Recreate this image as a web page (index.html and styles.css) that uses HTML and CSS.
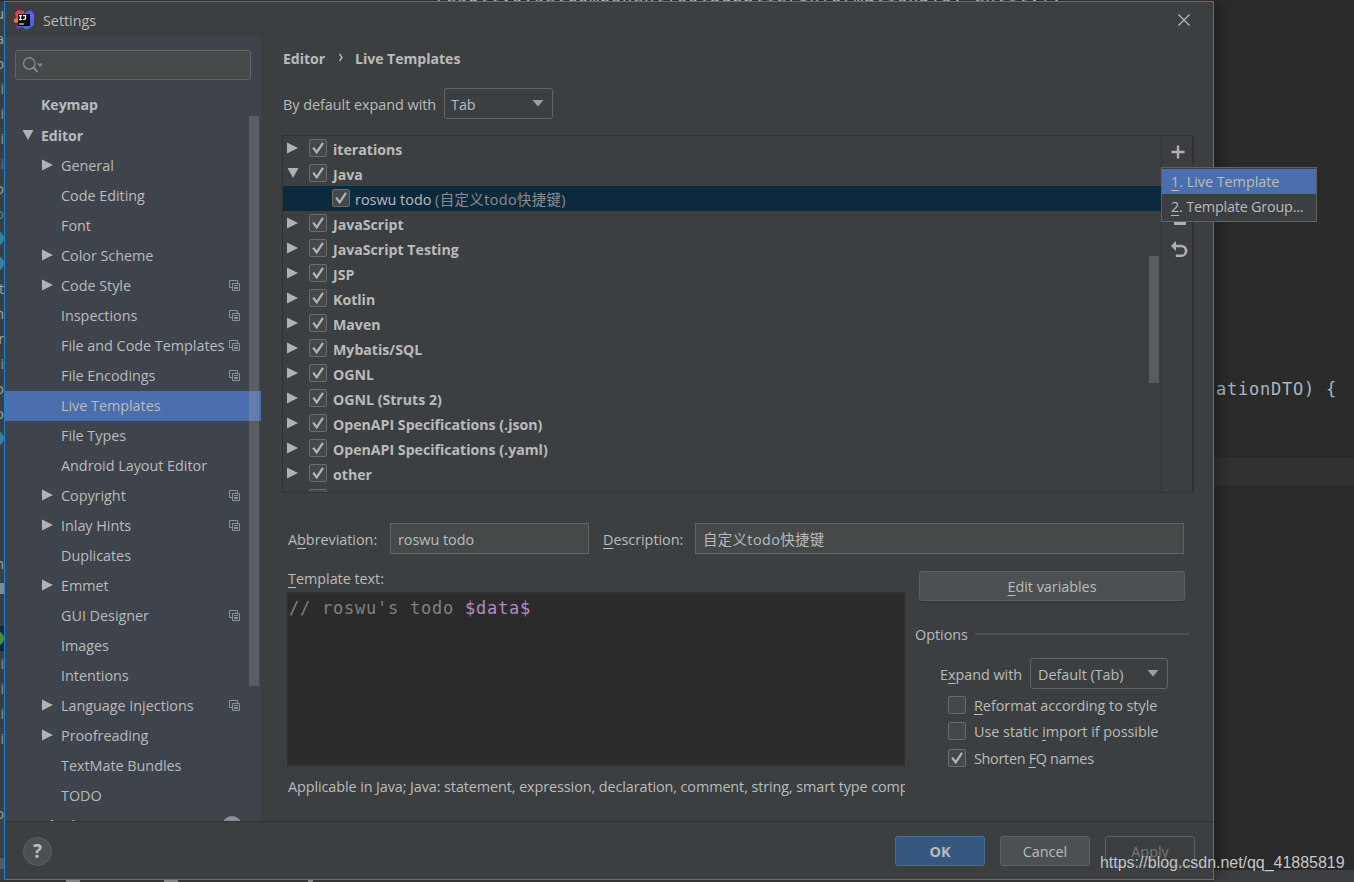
FILE: index.html
```html
<!DOCTYPE html>
<html lang="en">

<head>
  <meta charset="utf-8">
  <title>Settings</title>
  <link rel="stylesheet" href="styles.css">
</head>

<body>
  <!-- shared icons -->
  <svg class="defs" width="0" height="0">
    <symbol id="right" viewBox="0 0 12 12"><path d="M0 0.5L11 6L0 11.5Z" fill="#afb1b3" /></symbol>
    <symbol id="down" viewBox="0 0 12 12"><path d="M0.5 1H11.5L6 11Z" fill="#afb1b3" /></symbol>
    <symbol id="copy" viewBox="0 0 11 11">
      <path d="M3 7.5H0.5V0.5H8.5V3" fill="none" stroke="#87939a" />
      <path d="M3.5 3.5H10.5V10.5H3.5Z" fill="none" stroke="#87939a" />
      <path d="M5 5.5H9M5 7.5H9M5 8.5H9" stroke="#87939a" />
    </symbol>
    <symbol id="check" viewBox="1 1 16 16"><path d="M4.2 8.6L7.7 13.4L14 3.8" fill="none" stroke="#b4b6b7" stroke-width="2.2" /></symbol>
  </svg>

  <!-- editor behind the dialog -->
  <div class="gutter">
    <span>u</span><span>a</span><span class="tan">p</span><span class="pale">i</span><span class="pale">i</span>
    <span class="pale">i</span><span class="blue">i</span><span class="tan">o</span><span class="teal">o</span>
    <span><i class="dot"></i></span><span><i class="dot"></i></span><span>t</span><span>h</span><span>r</span>
    <span class="pale">i</span><span class="tan">o</span><span>o</span><span><i class="dot"></i></span>
    <span></span><span></span><span></span><span></span><span>n</span><span><i class="block"></i></span><span></span>
    <span class="current"><i class="dot green"></i></span><span class="pale">i</span><span class="pale">i</span>
    <span class="pale">i</span><span class="pale">i</span><span></span><span></span><span class="tan">p</span>
    <span></span><span><i class="block dim"></i></span>
  </div>
  <div class="code-top">resultVo.setComponentToolSupplierInformationDTO, entity);</div>
  <div class="code-right">nationDTO) {</div>
  <div class="caret-row"></div>
  <div class="status"></div>
  <div class="taskbar"><i></i><i></i><b></b></div>

  <div class="dialog">
    <div class="titlebar">
      <svg class="logo" width="20" height="20" viewBox="0 0 20 20">
        <path d="M1 3L4 0L10 1L11 5L4 12L0 10L2 8Z" fill="#fe315d" />
        <path d="M0 9L3 8L4 12L2 13L0 12Z" fill="#f97a12" />
        <path d="M12 2L16 0L20 4V15L13 20L8 17Z" fill="#3e67e0" />
        <path d="M16 0L20 4V9L16 12Z" fill="#6b57ff" />
        <path d="M3 15L9 16L6 18L2 19Z" fill="#8a3ab5" />
        <path d="M4 4H16V16H4Z" fill="#050505" />
        <path d="M5 5.6H8M6.5 5.6V9.6M5 9.6H8M9 5.6H11.5V8.3Q11.5 9.6 9 9.6" fill="none" stroke="#fff" stroke-width="1.3" />
        <path d="M5 14H10" stroke="#ddd" stroke-width="1.2" />
      </svg>
      <span>Settings</span>
      <svg class="close" width="12" height="12" viewBox="0 0 12 12"><path d="M0.5 0.5L11.5 11.5M11.5 0.5L0.5 11.5" stroke="#bbb" stroke-width="1.2" /></svg>
    </div>

    <div class="body">
      <div class="sidebar">
        <div class="search">
          <svg width="22" height="18" viewBox="0 0 22 18" fill="none" stroke="#7d8d94" stroke-width="1.4">
            <circle cx="6.3" cy="6.5" r="5.7" /><path d="M10.4 10.5L14.5 14.8" stroke-width="2" /><path d="M14 6.5H20L17 10Z" fill="#7d8d94" stroke="none" />
          </svg>
        </div>
        <div class="tree">
          <div class="item top keymap"><span>Keymap</span></div>
          <div class="item top"><svg class="arrow"><use href="#down" /></svg><span>Editor</span></div>
          <div class="item"><svg class="arrow"><use href="#right" /></svg><span>General</span></div>
          <div class="item"><span>Code Editing</span></div>
          <div class="item"><span>Font</span></div>
          <div class="item"><svg class="arrow"><use href="#right" /></svg><span>Color Scheme</span></div>
          <div class="item"><svg class="arrow"><use href="#right" /></svg><span>Code Style</span><svg class="copy"><use href="#copy" /></svg></div>
          <div class="item"><span>Inspections</span><svg class="copy"><use href="#copy" /></svg></div>
          <div class="item"><span>File and Code Templates</span><svg class="copy"><use href="#copy" /></svg></div>
          <div class="item"><span>File Encodings</span><svg class="copy"><use href="#copy" /></svg></div>
          <div class="item selected"><span>Live Templates</span></div>
          <div class="item"><span>File Types</span></div>
          <div class="item"><span>Android Layout Editor</span></div>
          <div class="item"><svg class="arrow"><use href="#right" /></svg><span>Copyright</span><svg class="copy"><use href="#copy" /></svg></div>
          <div class="item"><svg class="arrow"><use href="#right" /></svg><span>Inlay Hints</span><svg class="copy"><use href="#copy" /></svg></div>
          <div class="item"><span>Duplicates</span></div>
          <div class="item"><svg class="arrow"><use href="#right" /></svg><span>Emmet</span></div>
          <div class="item"><span>GUI Designer</span><svg class="copy"><use href="#copy" /></svg></div>
          <div class="item"><span>Images</span></div>
          <div class="item"><span>Intentions</span></div>
          <div class="item"><svg class="arrow"><use href="#right" /></svg><span>Language Injections</span><svg class="copy"><use href="#copy" /></svg></div>
          <div class="item"><svg class="arrow"><use href="#right" /></svg><span>Proofreading</span></div>
          <div class="item"><span>TextMate Bundles</span></div>
          <div class="item"><span>TODO</span></div>
          <div class="item top plugins"><span>Plugins</span><b class="badge">2</b></div>
          <div class="tree-scroll"></div>
        </div>
      </div>

      <div class="main">
        <div class="crumbs"><span class="crumb-root">Editor</span><svg width="6" height="10" viewBox="0 0 6 10"><path d="M2.5 1L5 4.5L2.5 8" fill="none" stroke="#bbb" stroke-width="1.3" /></svg><span class="crumb-page">Live Templates</span></div>
        <div class="expand">
          <span class="expand-label">By default expand with</span>
          <div class="combo combo-tab"><span>Tab</span><svg width="12" height="7" viewBox="0 0 12 7"><path d="M0.5 0H11.5L6 6.5Z" fill="#9da0a2" /></svg></div>
        </div>

        <div class="templates">
          <div class="list">
            <div class="row"><svg class="arrow"><use href="#right" /></svg><svg class="box"><use href="#check" /></svg><b>iterations</b></div>
            <div class="row"><svg class="arrow"><use href="#down" /></svg><svg class="box"><use href="#check" /></svg><b>Java</b></div>
            <div class="row child"><svg class="box"><use href="#check" /></svg><span>roswu todo <em>(自定义todo快捷键)</em></span></div>
            <div class="row"><svg class="arrow"><use href="#right" /></svg><svg class="box"><use href="#check" /></svg><b>JavaScript</b></div>
            <div class="row"><svg class="arrow"><use href="#right" /></svg><svg class="box"><use href="#check" /></svg><b>JavaScript Testing</b></div>
            <div class="row"><svg class="arrow"><use href="#right" /></svg><svg class="box"><use href="#check" /></svg><b>JSP</b></div>
            <div class="row"><svg class="arrow"><use href="#right" /></svg><svg class="box"><use href="#check" /></svg><b>Kotlin</b></div>
            <div class="row"><svg class="arrow"><use href="#right" /></svg><svg class="box"><use href="#check" /></svg><b>Maven</b></div>
            <div class="row"><svg class="arrow"><use href="#right" /></svg><svg class="box"><use href="#check" /></svg><b>Mybatis/SQL</b></div>
            <div class="row"><svg class="arrow"><use href="#right" /></svg><svg class="box"><use href="#check" /></svg><b>OGNL</b></div>
            <div class="row"><svg class="arrow"><use href="#right" /></svg><svg class="box"><use href="#check" /></svg><b>OGNL (Struts 2)</b></div>
            <div class="row"><svg class="arrow"><use href="#right" /></svg><svg class="box"><use href="#check" /></svg><b>OpenAPI Specifications (.json)</b></div>
            <div class="row"><svg class="arrow"><use href="#right" /></svg><svg class="box"><use href="#check" /></svg><b>OpenAPI Specifications (.yaml)</b></div>
            <div class="row"><svg class="arrow"><use href="#right" /></svg><svg class="box"><use href="#check" /></svg><b>other</b></div>
            <div class="row last"><svg class="box"></svg></div>
            <div class="list-scroll"></div>
          </div>
          <div class="tools">
            <svg width="14" height="14" viewBox="0 0 14 14"><path d="M7 0.5V13.5M0.5 7H13.5" stroke="#afb1b3" stroke-width="2.4" /></svg>
            <svg class="minus" width="14" height="3" viewBox="0 0 14 3"><path d="M1 1.5H13" stroke="#afb1b3" stroke-width="3" /></svg>
            <svg class="undo" width="18" height="17" viewBox="0 0 18 17"><path d="M4 5H10.2A4.9 4.9 0 0 1 10.2 14.8H4.8" fill="none" stroke="#afb1b3" stroke-width="2.6" /><path d="M0 5L5 0V10Z" fill="#afb1b3" /></svg>
          </div>
        </div>

        <div class="fields">
          <span class="abbr">A<u>b</u>breviation:</span>
          <div class="input input-abbr">roswu todo</div>
          <span class="desc"><u>D</u>escription:</span>
          <div class="input input-desc">自定义todo快捷键</div>
        </div>

        <div class="lower">
          <div class="text">
            <div class="text-label"><u>T</u>emplate text:</div>
            <div class="editor">// roswu's todo <span>$data$</span></div>
            <div class="applicable">Applicable in Java; Java: statement, expression, declaration, comment, string, smart type completion</div>
          </div>
          <div class="options">
            <div class="btn variables"><span><u>E</u>dit variables</span></div>
            <div class="legend"><span>Options</span><hr></div>
            <div class="expand-with">
              <span>E<u>x</u>pand with</span>
              <div class="combo combo-default"><span>Default (Tab)</span><svg width="12" height="7" viewBox="0 0 12 7"><path d="M0.5 0H11.5L6 6.5Z" fill="#9da0a2" /></svg></div>
            </div>
            <div class="option"><svg class="box"></svg><span><u>R</u>eformat according to style</span></div>
            <div class="option"><svg class="box"></svg><span>Use static <u>i</u>mport if possible</span></div>
            <div class="option"><svg class="box"><use href="#check" /></svg><span class="shorten">Shorten <u>F</u>Q names</span></div>
          </div>
        </div>
      </div>
    </div>

    <div class="footer">
      <div class="help">?</div>
      <div class="btn ok">OK</div>
      <div class="btn">Cancel</div>
      <div class="btn disabled">Apply</div>
    </div>
  </div>

  <div class="popup">
    <div class="popup-item active"><u>1</u>. Live Template</div>
    <div class="popup-item group"><u>2</u>. Template Group...</div>
  </div>

  <div class="watermark">https://blog.csdn.net/qq_41885819</div>
</body>

</html>
```
FILE: styles.css
```css
* {
  box-sizing: border-box;
}

body {
  margin: 0;
  width: 1354px;
  height: 882px;
  position: relative;
  overflow: hidden;
  background-color: #2b2b2b;
  color: #bbbbbb;
  font-family: "Open Sans", "Noto Sans CJK SC", sans-serif;
  font-size: 14.4px;
  letter-spacing: -0.03px;
  white-space: nowrap;
}

svg {
  display: block;
  flex-shrink: 0;
}

u {
  text-decoration-thickness: 1px;
  text-underline-offset: 3px;
  text-decoration-skip-ink: none;
}

.defs {
  position: absolute;
}

/* editor window behind */
.gutter {
  position: absolute;
  left: 0;
  top: 1px;
  width: 4px;
  height: 881px;
  overflow: hidden;
  background-color: #3c3f41;
  display: flex;
  flex-direction: column;
}

.gutter span {
  flex: 0 0 25px;
  display: flex;
  align-items: center;
  justify-content: flex-end;
  color: #a0a3a5;
}

.gutter .tan { color: #a8a283; }
.gutter .pale { color: #8297a3; }
.gutter .blue { color: #4c78b0; }
.gutter .teal { color: #4a8296; }
.gutter .current { background-color: #0d293e; }

.dot {
  flex: none;
  width: 15px;
  height: 15px;
  border-radius: 50%;
  background-color: #3b8296;
}

.green {
  background-color: #4b8f3c;
}

.block {
  width: 4px;
  height: 11px;
  background-color: #7f8b91;
}

.dim {
  background-color: #56595b;
}

.code-top,
.code-right,
.editor {
  font-family: "DejaVu Sans Mono", monospace;
  font-size: 17px;
  letter-spacing: 0.77px;
}

.code-top {
  position: absolute;
  left: 435px;
  top: -12px;
  height: 14px;
  line-height: 16px;
  overflow: hidden;
  color: #a9b7c6;
}

.code-right {
  position: absolute;
  left: 1205px;
  top: 378px;
  line-height: 22px;
  color: #a9b7c6;
}

.caret-row {
  position: absolute;
  left: 1214px;
  top: 458px;
  width: 140px;
  height: 27px;
  background-color: #323232;
}

.status {
  position: absolute;
  left: 1214px;
  top: 870px;
  width: 140px;
  height: 12px;
  background-color: #3c3f41;
}

.taskbar {
  position: absolute;
  left: 0;
  top: 880px;
  width: 1214px;
  height: 2px;
  padding-left: 66px;
  background-color: #323437;
  display: flex;
  gap: 84px;
}

.taskbar i,
.taskbar b {
  width: 14px;
  background-color: #85878a;
}

.taskbar b {
  width: 5px;
  margin-left: 46px;
}

/* dialog */
.dialog {
  position: absolute;
  left: 4px;
  top: 1px;
  width: 1210px;
  height: 879px;
  border: 1px solid #1883d7;
  background-color: #3c3f41;
  box-shadow: 4px 0 18px rgba(0, 0, 0, 0.35);
  clip-path: inset(0 -30px 0 0);
  display: flex;
  flex-direction: column;
}

.titlebar {
  height: 35px;
  padding: 0 23px 0 9px;
  display: flex;
  align-items: center;
}

.titlebar span {
  margin: 2px auto 0 9px;
}

.body {
  height: 784px;
  display: flex;
}

.sidebar {
  width: 256px;
  padding-top: 13px;
  background-color: #3e434c;
}

.search {
  width: 236px;
  height: 30px;
  margin-left: 10px;
  padding: 6px 7px;
  border: 1px solid #646464;
  border-radius: 3px;
  background-color: #45494a;
}

.tree {
  position: relative;
  margin-top: 11px;
  height: 730px;
  overflow: hidden;
}

.item {
  height: 30px;
  padding: 0 21px 2px 56px;
  display: flex;
  align-items: center;
}

.item .arrow {
  margin-left: -19px;
  margin-right: 7px;
}

.top {
  padding-left: 36px;
  font-weight: bold;
  font-size: 14.1px;
}

.keymap {
  padding-bottom: 3px;
}

.plugins {
  padding-bottom: 1px;
}

.arrow {
  width: 12px;
  height: 12px;
}

.copy {
  width: 11px;
  height: 11px;
  margin-left: auto;
  margin-top: 1px;
}

.badge {
  width: 20px;
  height: 20px;
  margin-left: auto;
  margin-right: -2px;
  margin-top: 1px;
  border-radius: 50%;
  background-color: #87939a;
  color: #3e434c;
  text-align: center;
}

.selected {
  background-color: #4b6eaf;
}

.tree-scroll {
  position: absolute;
  right: 2px;
  top: 25px;
  width: 10px;
  height: 570px;
  background-color: rgba(166, 166, 166, 0.28);
}

/* right side */
.main {
  padding: 6px 0 0 21px;
  width: 952px;
}

.crumbs {
  height: 30px;
  display: flex;
  align-items: center;
  font-weight: bold;
  font-size: 14.1px;
}

.crumb-root {
  width: 55px;
  padding-left: 1px;
}

.crumb-page {
  margin-left: 12px;
}

.expand {
  height: 31px;
  margin-top: 15px;
  padding-left: 1px;
  display: flex;
  align-items: center;
}

.expand-label {
  width: 161px;
  padding-top: 2px;
}

.combo {
  height: 31px;
  padding: 0 8px 0 6px;
  border: 1px solid #646464;
  border-radius: 3px;
  display: flex;
  align-items: center;
  justify-content: space-between;
}

.combo span {
  padding-top: 2px;
}

.combo-tab {
  width: 109px;
}

.combo-default {
  width: 138px;
  padding-left: 7px;
}

.templates {
  width: 912px;
  height: 358px;
  margin-top: 16px;
  border: 1px solid #323232;
  border-right-width: 2px;
  display: flex;
}

.list {
  position: relative;
  width: 878px;
  overflow: hidden;
}

.row {
  height: 25px;
  padding-left: 4px;
  display: flex;
  align-items: center;
  font-size: 14.15px;
}

.row .arrow {
  margin-right: 10px;
  margin-bottom: 1px;
}

.box {
  width: 18px;
  height: 18px;
  border: 1px solid #6b6b6b;
  border-radius: 2px;
  background-color: #43494a;
}

.row .box {
  margin-right: 6px;
  margin-bottom: 1px;
}

.row b,
.row span {
  padding-top: 2px;
  letter-spacing: 0;
}

.row.child {
  padding-left: 49px;
  background-color: #0d293e;
  font-size: 14.4px;
}

.child .box {
  margin-right: 5px;
}

.child span {
  padding-top: 0;
}

.child em {
  font-style: normal;
  color: #8c8c8c;
  letter-spacing: 0.4px;
}

.row.last {
  padding-left: 26px;
}

.list-scroll {
  position: absolute;
  right: 2px;
  top: 120px;
  width: 10px;
  height: 127px;
  background-color: #595b5d;
}

.tools {
  flex: 1;
  padding: 9px 0 0 9px;
  border-left: 1px solid #323232;
}

.minus {
  margin: 63px 0 0 2px;
}

.undo {
  margin: 16px 0 0;
}

.fields {
  height: 31px;
  margin-top: 30px;
  padding-left: 6px;
  display: flex;
  align-items: center;
}

.abbr {
  width: 102px;
  padding-top: 2px;
}

.desc {
  width: 92px;
  padding-top: 2px;
}

.input {
  height: 31px;
  padding-left: 7px;
  border: 1px solid #646464;
  background-color: #45494a;
  line-height: 32px;
}

.input-abbr {
  width: 199px;
  margin-right: 14px;
}

.input-desc {
  width: 489px;
  letter-spacing: 0.4px;
}

.lower {
  margin-top: 17px;
  display: flex;
}

.text {
  width: 623px;
  padding-left: 5px;
}

.text-label {
  height: 21px;
  line-height: 16px;
  padding-left: 1px;
}

.editor {
  height: 174px;
  padding: 5px 0 0 1px;
  border: 1px solid #323232;
  background-color: #2b2b2b;
  color: #808080;
  line-height: 21px;
}

.editor span {
  color: #b389c5;
}

.applicable {
  padding-left: 1px;
  line-height: 42px;
  letter-spacing: -0.09px;
  overflow: hidden;
}

.options {
  width: 274px;
  margin-left: 10px;
}

.btn {
  width: 90px;
  height: 30px;
  border: 1px solid #5e6060;
  border-radius: 3px;
  background-color: #4c5052;
  display: flex;
  align-items: center;
  justify-content: center;
}

.variables {
  width: 266px;
  margin-left: 4px;
  box-shadow: 0 1px 1px #333638;
}

.legend {
  height: 24px;
  margin-top: 21px;
  display: flex;
  align-items: center;
}

.legend span {
  width: 60px;
}

.legend hr {
  flex: 1;
  height: 2px;
  margin: 0;
  border: none;
  background-color: #515151;
}

.expand-with {
  height: 31px;
  margin: 12px 0 3px 25px;
  display: flex;
  align-items: center;
}

.expand-with > span {
  width: 90px;
  padding-top: 2px;
}

.option {
  height: 26.5px;
  padding-left: 33px;
  display: flex;
  align-items: center;
}

.option .box {
  margin-bottom: 1px;
}

.option span {
  margin-left: 8px;
}

.option .shorten {
  letter-spacing: -0.3px;
}

.footer {
  height: 58px;
  padding: 1px 18px 0;
  border-top: 1px solid #323232;
  display: flex;
  align-items: center;
  gap: 15px;
}

.help {
  width: 29px;
  height: 29px;
  margin-right: auto;
  border: 1px solid #5e6060;
  border-radius: 50%;
  background-color: #4c5052;
  text-align: center;
  font-size: 19px;
  font-weight: bold;
  line-height: 27px;
}

.ok {
  background-color: #365880;
  border-color: #4c708c;
  font-weight: bold;
}

.disabled {
  background-color: transparent;
  color: #777777;
}

/* popup of the + button */
.popup {
  position: absolute;
  left: 1161px;
  top: 167px;
  width: 156px;
  height: 55px;
  padding-top: 1px;
  border: 1px solid #616161;
  background-color: #3c3f41;
}

.popup-item {
  height: 25px;
  padding-left: 9px;
  line-height: 26px;
}

.group {
  letter-spacing: -0.2px;
}

.active {
  background-color: #4b6eaf;
}

.watermark {
  position: absolute;
  left: 1100px;
  top: 853px;
  font-family: "Liberation Sans", sans-serif;
  font-size: 16px;
  line-height: 19px;
  color: #c9c9c9;
  text-shadow: 0 0 1px #222222;
}
```
